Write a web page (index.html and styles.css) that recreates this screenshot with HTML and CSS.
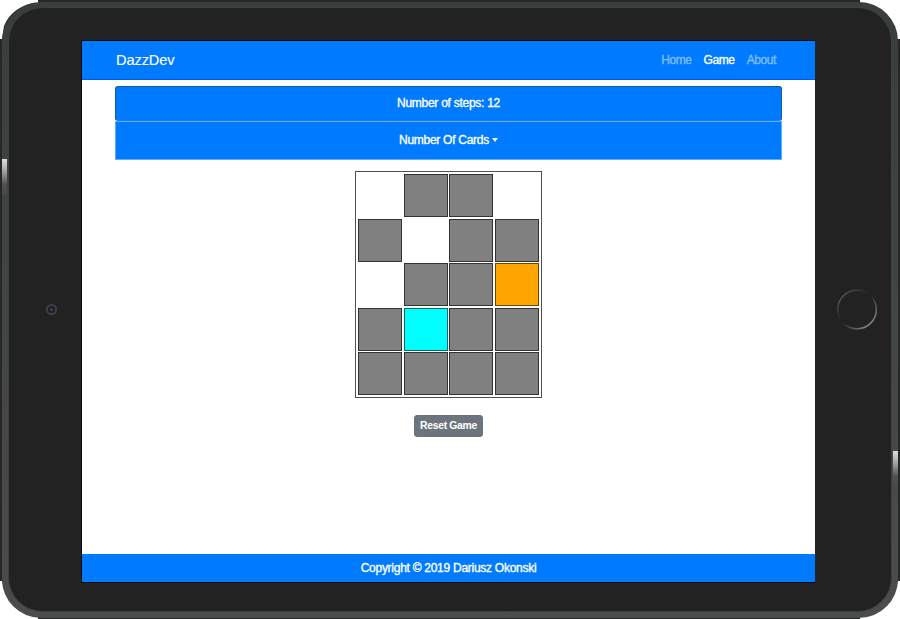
FILE: index.html
```
<!DOCTYPE html>
<html lang="en">
<head>
<meta charset="utf-8">
<title>DazzDev</title>
<link rel="stylesheet" href="styles.css">
</head>
<body>
<div class="device">
  <svg class="bezel" width="900" height="619" viewBox="0 0 900 619" aria-hidden="true">
    <defs>
      <linearGradient id="rim" x2="0" y2="1"><stop stop-color="#393e3b"/><stop offset=".5" stop-color="#414544"/><stop offset="1" stop-color="#4b4d4b"/></linearGradient>
      <linearGradient id="shine" x2="0" y2="1"><stop stop-color="#ddd"/><stop offset=".3" stop-color="#aaa"/><stop offset=".7" stop-color="#505252"/><stop offset="1" stop-color="#454847"/></linearGradient>
      <linearGradient id="ring" x2="1" y2="1"><stop stop-color="#666"/><stop offset=".43" stop-color="#222"/><stop offset=".5" stop-color="#222"/><stop offset="1" stop-color="#aaa"/></linearGradient>
    </defs>
    <path fill="#252827" d="M38 0H860V3H898V39H900V581H898V616H860V619H38V616H2V581H0V39H2V3H38Z"/>
    <path fill="#fff" d="M0 0H38V2Q12 6 4 26L2 39H0ZM860 0H900V39H897Q892 8 860 2ZM0 581H2Q7 610 38 618V619H0ZM900 581H898Q892 610 861 618V619H900Z"/>
    <rect x="2" y="2" width="896" height="616" rx="39" fill="url(#rim)"/>
    <rect x="2" y="159" width="5" height="36" fill="url(#shine)"/>
    <rect x="893" y="451" width="5" height="36" fill="url(#shine)"/>
    <rect x="8.5" y="7.5" width="883" height="604" rx="34" fill="#222" stroke="#3d404b"/>
    <circle cx="51.5" cy="309.5" r="4.7" fill="#20202b" stroke="#444" stroke-width="1.7"/>
    <circle cx="51.5" cy="309.5" r="1.5" fill="#44366a"/>
    <circle cx="857" cy="309.5" r="19.3" fill="none" stroke="url(#ring)" stroke-width="1.5"/>
  </svg>
  <div class="screen">
    <nav class="navbar">
      <span class="brand">DazzDev</span>
      <div class="links"><span>Home</span><span class="active">Game</span><span>About</span></div>
    </nav>
    <main>
      <div class="steps">Number of steps: 12</div>
      <div class="cards">Number Of Cards<i class="caret"></i></div>
      <div class="board">
        <i class="card open"></i><i class="card"></i><i class="card"></i><i class="card open"></i>
        <i class="card"></i><i class="card open"></i><i class="card"></i><i class="card"></i>
        <i class="card open"></i><i class="card"></i><i class="card"></i><i class="card orange"></i>
        <i class="card"></i><i class="card cyan"></i><i class="card"></i><i class="card"></i>
        <i class="card"></i><i class="card"></i><i class="card"></i><i class="card"></i>
      </div>
      <button class="reset">Reset Game</button>
    </main>
    <footer>Copyright © 2019 Dariusz Okonski</footer>
  </div>
</div>
</body>
</html>
```
FILE: styles.css
```
* { box-sizing: border-box; }
body {
  margin: 0;
  background: #fff;
  font: 12px/18px "Liberation Sans", Arial, sans-serif;
  letter-spacing: -.27px;
  color: #fff;
  -webkit-text-stroke: .35px;
}
.device { position: relative; width: 900px; height: 619px; padding: 40px 85px 36px 81px; overflow: hidden; }
.bezel { position: absolute; inset: 0; }
.screen {
  position: relative;
  display: flex;
  flex-direction: column;
  height: 543px;
  border: 1px solid #050b12;
  border-right: 0;
  background: #fff;
}
.navbar {
  display: flex;
  justify-content: space-between;
  align-items: center;
  height: 39px;
  padding: 0 39px 0 34px;
  background: #007bff;
  border-bottom: 1px solid #005bea;
}
.brand { font-size: 14.6px; letter-spacing: -.1px; -webkit-text-stroke: .1px; }
.links { display: flex; gap: 12px; color: #80bdff; letter-spacing: -.4px; }
.active { color: #fff; }
main { flex: 1; display: flex; flex-direction: column; align-items: center; padding: 6px 33px 0; }
.steps {
  width: 667px;
  height: 35px;
  line-height: 32px;
  text-align: center;
  background: #007bff;
  border: 1px solid #165c9f;
  border-bottom-color: #227ddd;
  border-radius: 3px;
}
.cards {
  display: flex;
  align-items: center;
  justify-content: center;
  gap: 3px;
  width: 667px;
  height: 39px;
  padding-bottom: 1px;
  background: #007bff;
  border: 1px solid #62abf9;
}
.caret { border: 3.5px solid transparent; border-top: 4px solid #fff; border-bottom: 0; }
.board {
  display: grid;
  grid-template-columns: repeat(4, 44px);
  grid-template-rows: repeat(5, 43px);
  gap: 1.6px;
  width: 187px;
  height: 227px;
  margin-top: 11px;
  padding: 2px;
  border: 1px solid #574b4b;
}
.card { background: #808080; border: 1px solid #333; }
.card.open { visibility: hidden; }
.card.orange { background: #ffa500; border-color: #6b4706; }
.card.cyan { background: #0ff; border-color: #0a6666; }
.reset {
  width: 69px;
  height: 22px;
  margin-top: 17px;
  padding: 0;
  font: bold 10.4px/20px "Liberation Sans", Arial, sans-serif;
  letter-spacing: -.33px;
  color: #fff;
  background: #6c757d;
  border: 1px solid #69727a;
  border-radius: 3px;
  -webkit-text-stroke: 0;
}
footer { height: 28px; line-height: 28px; text-align: center; background: #007bff; }
```
